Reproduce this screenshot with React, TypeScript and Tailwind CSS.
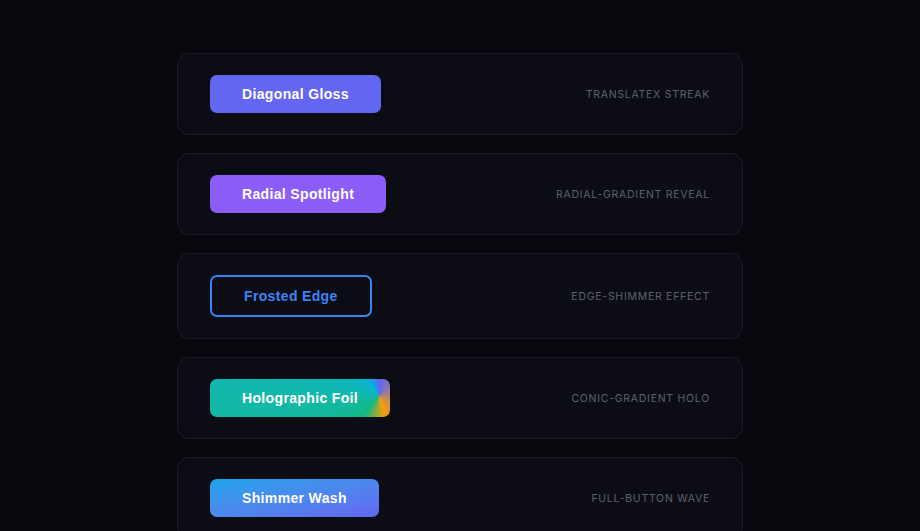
const rows = [
  {
    label: "Diagonal Gloss",
    caption: "TranslateX Streak",
    button: "bg-[#6366f1] text-white",
  },
  {
    label: "Radial Spotlight",
    caption: "Radial-Gradient Reveal",
    button: "bg-[#8b5cf6] text-white",
  },
  {
    label: "Frosted Edge",
    caption: "Edge-Shimmer Effect",
    button: "border-2 border-[#3b82f6] text-[#3b82f6] bg-transparent",
  },
  {
    label: "Holographic Foil",
    caption: "Conic-Gradient Holo",
    button:
      "text-white bg-[conic-gradient(from_0deg_at_94%_45%,#6366f1_0deg,#f59e0b_165deg,#10b981_220deg,#14b8a6_265deg,#06b6d4_325deg,#3b82f6_350deg,#6366f1_360deg)]",
  },
  {
    label: "Shimmer Wash",
    caption: "Full-Button Wave",
    button: "text-white bg-gradient-to-br from-[#0ea5e9] to-[#6366f1]",
  },
];

export default function App() {
  return (
    <div className="bg-[#07070d] min-h-screen w-full font-['Inter',sans-serif]">
      <div className="flex flex-col gap-[18px] mx-auto pt-[53px] pb-10 w-[566px]">
        {rows.map((row) => (
          <div
            key={row.label}
            className="flex justify-between items-center bg-[#0c0d14] px-8 py-[21px] border border-[#1b1c25] rounded-xl"
          >
            <button
              className={`px-8 py-[10px] rounded-[7px] font-['Liberation_Sans',Arial,sans-serif] font-bold text-[14px] leading-[18px] tracking-[0.025em] ${row.button}`}
            >
              {row.label}
            </button>
            <span className="mt-0.5 text-[#5d616f] text-[10.5px] uppercase tracking-[0.07em]">
              {row.caption}
            </span>
          </div>
        ))}
      </div>
    </div>
  );
}
